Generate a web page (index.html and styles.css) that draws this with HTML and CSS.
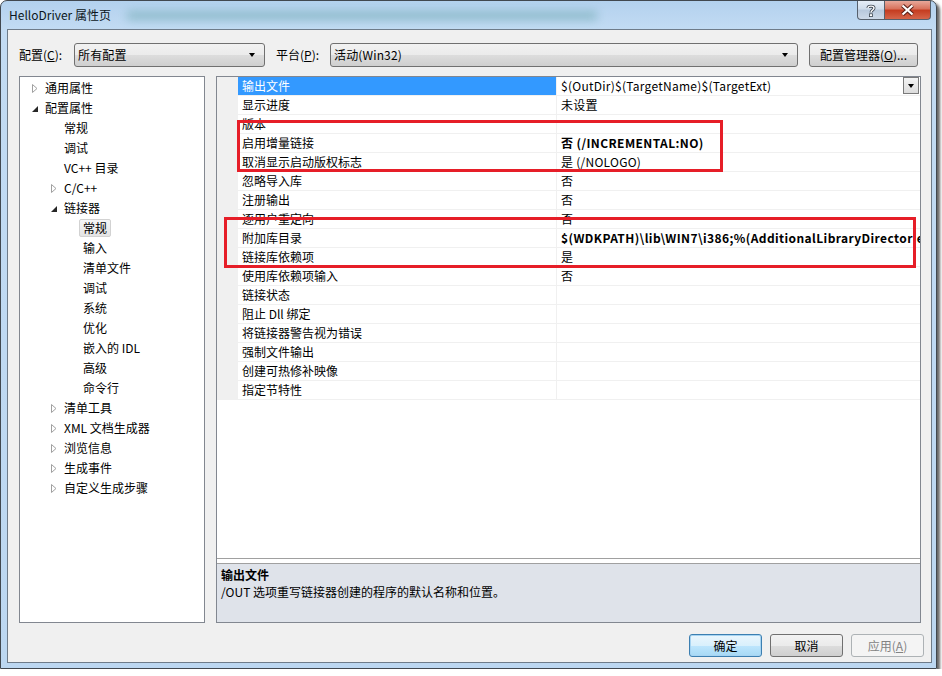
FILE: index.html
```html
<!DOCTYPE html>
<html lang="zh-CN">
<head>
  <meta charset="utf-8">
  <title>HelloDriver 属性页</title>
  <link rel="stylesheet" href="styles.css">
</head>
<body>
  <div class="window">
    <header class="titlebar">
      <span class="title">HelloDriver 属性页</span>
      <div class="caption">
        <button class="cap help">
          <svg width="10" height="13" viewBox="0 0 10 13"><path d="M2 4 C2 1.5 8 1.5 8 4 C8 6 5 6 5 8.5" fill="none" stroke="#3d4652" stroke-width="3"/><path d="M2 4 C2 1.5 8 1.5 8 4 C8 6 5 6 5 8.5" fill="none" stroke="#fff" stroke-width="1.4"/><rect x="3.5" y="9.8" width="3" height="2.8" fill="#fff" stroke="#3d4652" stroke-width=".8"/></svg>
        </button>
        <button class="cap close">
          <svg width="15" height="12" viewBox="0 0 15 12"><path d="M2.5 1.5 L12.5 10.5 M12.5 1.5 L2.5 10.5" stroke="#5a2018" stroke-width="4.2"/><path d="M2.5 1.5 L12.5 10.5 M12.5 1.5 L2.5 10.5" stroke="#fff" stroke-width="2.2"/></svg>
        </button>
      </div>
    </header>

    <div class="client">
      <div class="toolbar">
        <label class="lbl lbl-config">配置(<u>C</u>):</label>
        <div class="combo combo-config"><span>所有配置</span><i class="drop"></i></div>
        <label class="lbl lbl-platform">平台(<u>P</u>):</label>
        <div class="combo combo-platform"><span>活动(Win32)</span><i class="drop"></i></div>
        <button class="btn btn-manager">配置管理器(<u>O</u>)...</button>
      </div>

      <div class="main">
        <ul class="tree">
          <li><div class="node"><span class="twisty closed"></span>通用属性</div></li>
          <li><div class="node"><span class="twisty open"></span>配置属性</div>
            <ul>
              <li><div class="node"><span class="twisty"></span>常规</div></li>
              <li><div class="node"><span class="twisty"></span>调试</div></li>
              <li><div class="node"><span class="twisty"></span>VC++ 目录</div></li>
              <li><div class="node"><span class="twisty closed"></span>C/C++</div></li>
              <li><div class="node"><span class="twisty open"></span>链接器</div>
                <ul>
                  <li><div class="node"><span class="twisty"></span><span class="current">常规</span></div></li>
                  <li><div class="node"><span class="twisty"></span>输入</div></li>
                  <li><div class="node"><span class="twisty"></span>清单文件</div></li>
                  <li><div class="node"><span class="twisty"></span>调试</div></li>
                  <li><div class="node"><span class="twisty"></span>系统</div></li>
                  <li><div class="node"><span class="twisty"></span>优化</div></li>
                  <li><div class="node"><span class="twisty"></span>嵌入的 IDL</div></li>
                  <li><div class="node"><span class="twisty"></span>高级</div></li>
                  <li><div class="node"><span class="twisty"></span>命令行</div></li>
                </ul>
              </li>
              <li><div class="node"><span class="twisty closed"></span>清单工具</div></li>
              <li><div class="node"><span class="twisty closed"></span>XML 文档生成器</div></li>
              <li><div class="node"><span class="twisty closed"></span>浏览信息</div></li>
              <li><div class="node"><span class="twisty closed"></span>生成事件</div></li>
              <li><div class="node"><span class="twisty closed"></span>自定义生成步骤</div></li>
            </ul>
          </li>
        </ul>

        <section class="props">
          <div class="grid">
            <div class="row selected"><div class="name">输出文件</div><div class="value"><span class="text">$(OutDir)$(TargetName)$(TargetExt)</span><button class="cell-drop"><i class="drop"></i></button></div></div>
            <div class="row"><div class="name">显示进度</div><div class="value">未设置</div></div>
            <div class="row"><div class="name">版本</div><div class="value"></div></div>
            <div class="row"><div class="name">启用增量链接</div><div class="value bold">否 (/INCREMENTAL:NO)</div></div>
            <div class="row"><div class="name">取消显示启动版权标志</div><div class="value">是 (/NOLOGO)</div></div>
            <div class="row"><div class="name">忽略导入库</div><div class="value">否</div></div>
            <div class="row"><div class="name">注册输出</div><div class="value">否</div></div>
            <div class="row"><div class="name">逐用户重定向</div><div class="value">否</div></div>
            <div class="row"><div class="name">附加库目录</div><div class="value bold">$(WDKPATH)\lib\WIN7\i386;%(AdditionalLibraryDirectories)</div></div>
            <div class="row"><div class="name">链接库依赖项</div><div class="value">是</div></div>
            <div class="row"><div class="name">使用库依赖项输入</div><div class="value">否</div></div>
            <div class="row"><div class="name">链接状态</div><div class="value"></div></div>
            <div class="row"><div class="name">阻止 Dll 绑定</div><div class="value"></div></div>
            <div class="row"><div class="name">将链接器警告视为错误</div><div class="value"></div></div>
            <div class="row"><div class="name">强制文件输出</div><div class="value"></div></div>
            <div class="row"><div class="name">创建可热修补映像</div><div class="value"></div></div>
            <div class="row"><div class="name">指定节特性</div><div class="value"></div></div>
          </div>
          <div class="blank"></div>
          <div class="desc">
            <h3>输出文件</h3>
            <p>/OUT 选项重写链接器创建的程序的默认名称和位置。</p>
          </div>

          <!-- red markup boxes drawn over the grid -->
          <div class="mark mark-a"></div>
          <div class="mark mark-b"></div>
        </section>
      </div>

      <footer class="footer">
        <button class="btn btn-default">确定</button>
        <button class="btn">取消</button>
        <button class="btn" disabled>应用(<u>A</u>)</button>
      </footer>
    </div>
  </div>
</body>
</html>
```

FILE: styles.css
```css
* {
  margin: 0;
  padding: 0;
  box-sizing: border-box;
}

:root {
  --face: #f0f0f0;
  --grid-line: #f0f0f0;
  --edge: #828790;
  --select: #3399ff;
  --mark: #e61e28;
  --ui-font: "Noto Sans CJK SC", sans-serif;
}

body {
  background: #fff;
  color: #000;
  font: 12px/1 var(--ui-font);
}

button {
  font: inherit;
  color: inherit;
}

/* window frame */
.window {
  width: 937px;
  height: 669px;
  display: flex;
  flex-direction: column;
  padding: 0 4px 5px 6px;

  border: 1px solid #414850;
  border-radius: 7px 7px 0 0;
  background: linear-gradient(to bottom, #b3d1ee, #c2dbf3 28px, #bcd7f1);
  box-shadow: 3px 3px 3px rgba(0, 0, 0, .6);
}

.titlebar {
  height: 28px;
  display: flex;
  align-items: flex-start;
  position: relative;
}

.titlebar::after {
  content: "";
  position: absolute;
  left: 120px;
  top: 10px;
  width: 470px;
  height: 9px;
  background: #86b7c4;
  filter: blur(5px);
  opacity: .85;
}

.title {
  padding: 8px 0 0 2px;
  font-size: 12px;
  color: #0b1621;
  position: relative;
  z-index: 1;
}

.caption {
  margin-left: auto;
  margin-right: 1px;
  display: flex;
}

.cap {
  height: 19px;
  display: flex;
  align-items: center;
  justify-content: center;
  border: 1px solid #56606c;
  border-top: none;
}

.help {
  width: 28px;
  border-radius: 0 0 0 4px;
  background: linear-gradient(to bottom, #e6eef7, #cfdcea 45%, #b7c8dc 50%, #cdd9e8);
}

.close {
  width: 46px;
  border-left: none;
  border-radius: 0 0 4px 0;
  background: linear-gradient(to bottom, #e8a89a, #d7705a 45%, #c43b1f 50%, #d5654a);
}

/* client area */
.client {
  flex: 1;
  display: flex;
  flex-direction: column;
  padding: 13px 10px 5px 11px;
  background: var(--face);
  border: 1px solid #6e7b89;
}

.toolbar {
  display: flex;
  align-items: center;
  height: 24px;
}

.lbl u,
.btn u {
  text-decoration: underline;
}

.lbl-config { width: 55px; }
.lbl-platform { width: 54px; margin-left: 11px; }

.combo {
  height: 24px;
  display: flex;
  align-items: center;
  padding: 0 9px 0 3px;
  border: 1px solid #707070;
  border-radius: 3px;
  background: linear-gradient(to bottom, #f2f2f2, #ebebeb 50%, #dddddd 50%, #cfcfcf);
}

.combo span { flex: 1; letter-spacing: .15px; }
.combo-config { width: 191px; }
.combo-platform { width: 468px; }

.drop {
  width: 0;
  height: 0;
  border-left: 3.5px solid transparent;
  border-right: 3.5px solid transparent;
  border-top: 4px solid #000;
}

.btn {
  height: 24px;
  border: 1px solid #707070;
  border-radius: 3px;
  background: linear-gradient(to bottom, #f2f2f2, #ebebeb 50%, #dddddd 50%, #cfcfcf);
}

.btn-manager {
  width: 109px;
  margin-left: 11px;
}

/* tree + grid */
.main {
  flex: 1;
  display: flex;
  margin-top: 9px;
}

.tree {
  flex: none;
  width: 186px;
  list-style: none;
  padding: 1px 0 0 11px;
  background: #fff;
  border: 1px solid var(--edge);
}

.tree ul {
  list-style: none;
  padding-left: 19px;
}

.node {
  height: 20px;
  display: flex;
  align-items: center;
  white-space: nowrap;
}

.twisty {
  width: 14px;
  height: 9px;
  flex: none;
}

.twisty.closed {
  background: url("data:image/svg+xml,%3Csvg xmlns='http://www.w3.org/2000/svg' width='6' height='9'%3E%3Cpath d='M.5 .5 L5 4.5 L.5 8.5Z' fill='%23fff' stroke='%23a0a0a0'/%3E%3C/svg%3E") no-repeat 1px 0;
}

.twisty.open {
  background: url("data:image/svg+xml,%3Csvg xmlns='http://www.w3.org/2000/svg' width='6' height='6'%3E%3Cpath d='M6 0 L6 6 L0 6Z' fill='%23262626'/%3E%3C/svg%3E") no-repeat 1px 2px;
}

.current {
  margin-left: -4px;
  padding: 2px 3px;
  border: 1px solid #d2d2d2;
  border-radius: 2px;
  background: linear-gradient(to bottom, #f6f6f6, #e4e4e4);
}

.props {
  flex: 1;
  min-width: 0;
  margin-left: 11px;
  display: flex;
  flex-direction: column;
  position: relative;
  background: #fff;
  border: 1px solid var(--edge);
}

.grid {
  background: var(--face);
}

.row {
  display: flex;
  height: 19px;
  margin-left: 21px;
  background: #fff;
  border-bottom: 1px solid var(--grid-line);
  line-height: 18px;
}

.name {
  flex: none;
  width: 319px;
  padding-left: 4px;
  border-right: 1px solid var(--grid-line);
  white-space: nowrap;
}

.row.selected .name {
  background: var(--select);
  color: #fff;
}

.value {
  flex: 1;
  min-width: 0;
  display: flex;
  padding-left: 4px;
  white-space: nowrap;
  overflow: hidden;
  letter-spacing: .26px;
}

.value .text { flex: 1; }

.value.bold {
  font-weight: bold;
  letter-spacing: .4px;
}

.cell-drop {
  flex: none;
  width: 16px;
  height: 17px;
  margin: 0 1px 0 0;
  display: flex;
  align-items: center;
  justify-content: center;
  border: 1px solid #7a7a7a;
  background: linear-gradient(to bottom, #f4f4f4, #dcdcdc);
}

.blank {
  flex: 1;
  border-bottom: 1px solid #a0a0a0;
}

.desc {
  height: 59px;
  margin-top: 4px;
  padding: 5px 4px;
  background: #dfe3ea;
  border-top: 1px solid #a0a0a0;
}

.desc h3 {
  font-size: 12px;
  font-weight: bold;
  margin-bottom: 5px;
}

.mark {
  position: absolute;
  border: 3px solid var(--mark);
}

.mark-a { left: 20px; top: 43px; width: 486px; height: 52px; }
.mark-b { left: 7px; top: 140px; width: 692px; height: 51px; }

/* dialog buttons */
.footer {
  display: flex;
  justify-content: flex-end;
  gap: 8px;
  margin: 11px -3px 0 0;
}

.footer .btn {
  width: 73px;
  height: 23px;
}

.btn-default {
  border-color: #3c7fb1;
  box-shadow: inset 0 0 0 1px #a7d4f2;
  background: linear-gradient(to bottom, #eaf6fd, #d9f0fc 50%, #bee6fd 50%, #a7d9f5);
}

.btn:disabled {
  color: #838383;
  border-color: #adb2b5;
  background: #f4f4f4;
}
```
